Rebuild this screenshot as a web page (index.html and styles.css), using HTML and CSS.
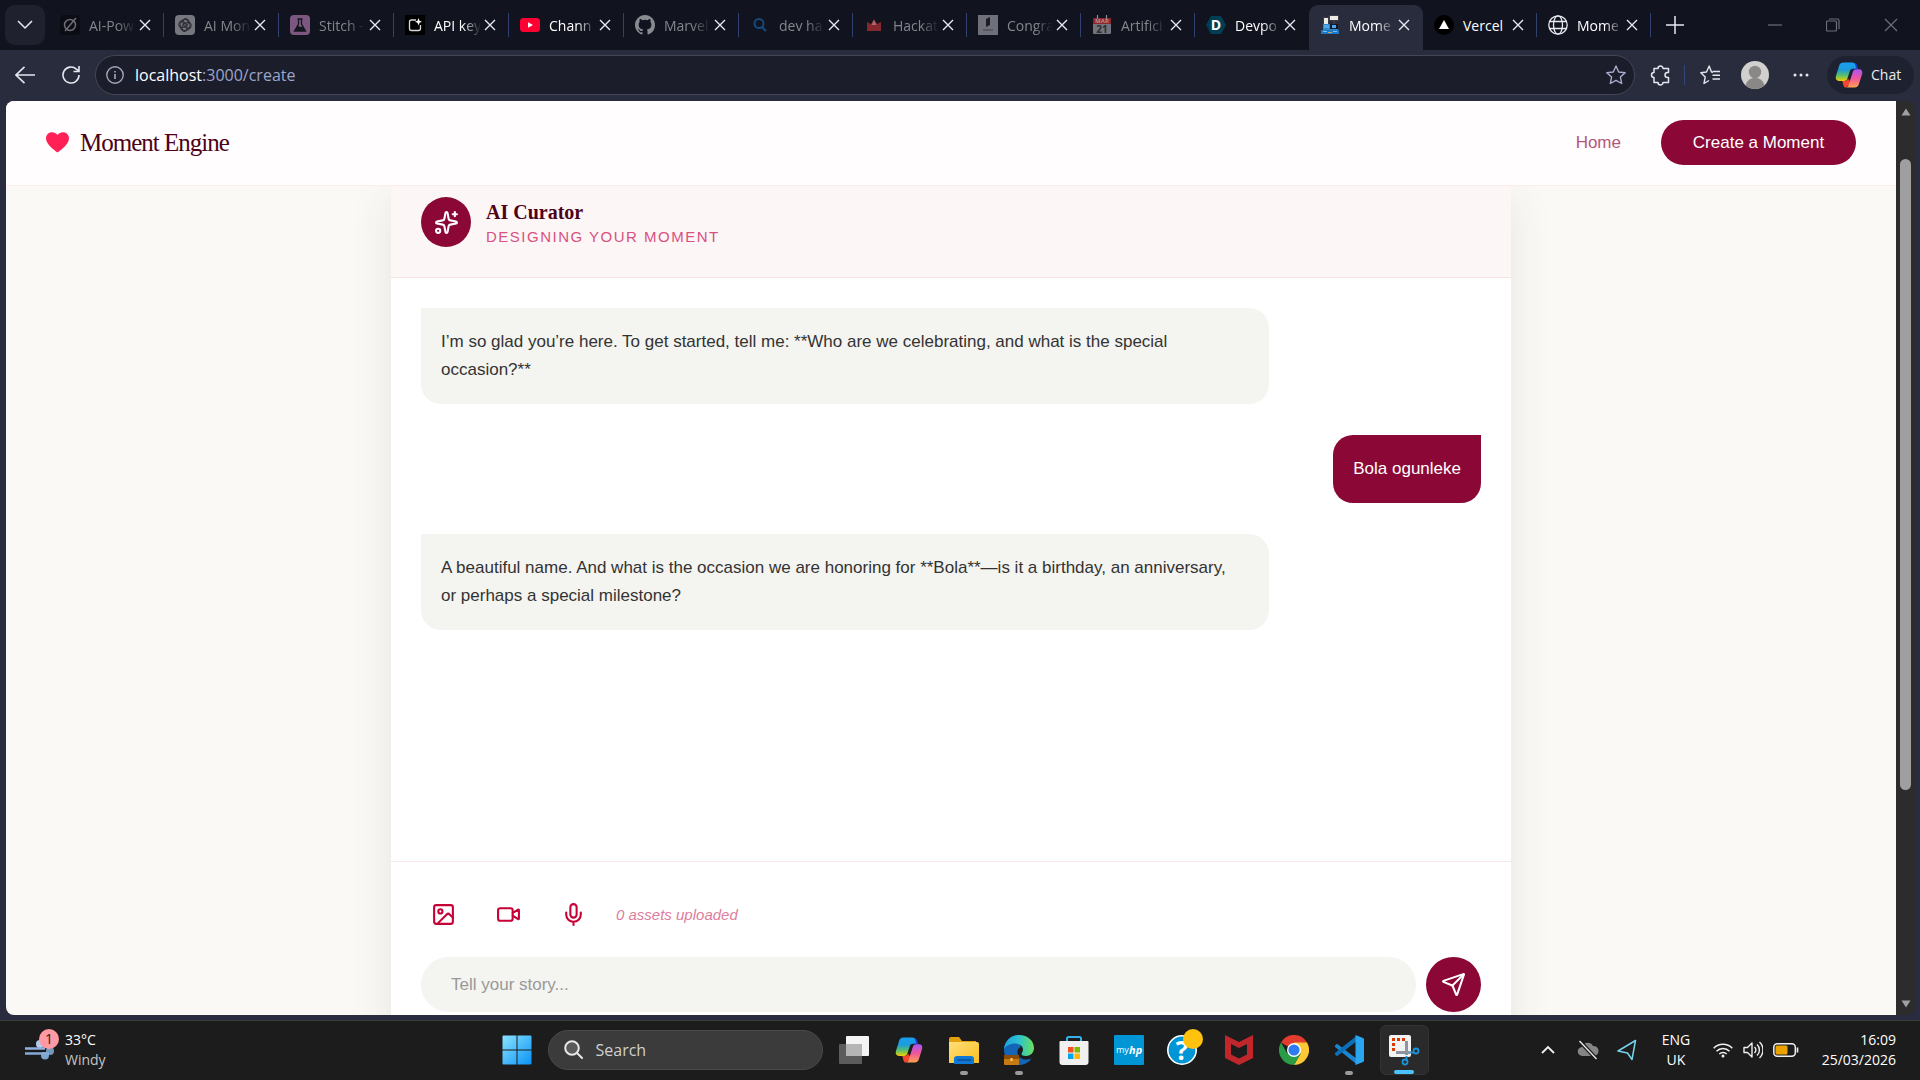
FILE: index.html
```html
<!DOCTYPE html>
<html lang="en">
<head>
<meta charset="utf-8">
<title>Moment Engine</title>
<link rel="stylesheet" href="styles.css">
</head>
<body>
<svg class="defs" aria-hidden="true">
  <defs>
    <linearGradient id="cpA" x1="0" y1="0" x2="0" y2="1"><stop offset="0" stop-color="#18a0f5"/><stop offset=".4" stop-color="#1c9bd8"/><stop offset=".7" stop-color="#5cbf6a"/><stop offset="1" stop-color="#f5d000"/></linearGradient>
    <linearGradient id="cpB" x1="0" y1="0" x2="0" y2="1"><stop offset="0" stop-color="#a855f7"/><stop offset=".5" stop-color="#f0569a"/><stop offset="1" stop-color="#ffa24d"/></linearGradient>
    <linearGradient id="win" x1="0" y1="0" x2="1" y2="1"><stop offset="0" stop-color="#8be3ff"/><stop offset="1" stop-color="#0a93f5"/></linearGradient>
    <linearGradient id="fold" x1="0" y1="0" x2="1" y2="1"><stop offset="0" stop-color="#ffdf7a"/><stop offset="1" stop-color="#fbbd1f"/></linearGradient>
    <linearGradient id="edge" x1="0" y1="0" x2="1" y2="0"><stop offset="0" stop-color="#1f9fe0"/><stop offset=".5" stop-color="#2cc3cf"/><stop offset="1" stop-color="#6be05a"/></linearGradient>
    <linearGradient id="wind" x1="0" y1="0" x2="1" y2="1"><stop offset="0" stop-color="#b9d2f5"/><stop offset="1" stop-color="#5a87b0"/></linearGradient>
    <symbol id="x" viewBox="0 0 12 12"><path d="M1 1l10 10M11 1L1 11" fill="none" stroke="currentColor" stroke-width="1.4"/></symbol>
    <symbol id="copilot" viewBox="0 0 28 28">
      <path d="M17 2h2.500c1.500 0 2.200 1 2.700 2.600L23.200 8h-4.400c-2 0-3 .8-3.500 2.500z" fill="#1743c9"/>
      <path d="M8.500 1.500h9c1.600 0 2.300.9 2.800 2.700l.9 3.300h-3c-2 0-2.900 1-3.400 2.700l-2.500 7.600c-.5 1.500-1.500 2.200-3 2.200H4c-2.600 0-3.800-2-3.100-4.700L4 5.300C4.700 2.700 6 1.500 8.500 1.500z" fill="url(#cpA)"/>
      <path d="M11 26.500c-1.500 0-2.200-1-2.700-2.600L7.300 20h2.200c2 0 3-.8 3.500-2.500L16 22z" fill="#f4452f"/>
      <path d="M19.500 26.500H11c1.500-.3 2.200-1.300 2.800-3.200l4-12.300c.6-1.700 1.500-2.700 3.400-2.700H24c2.600 0 3.800 2 3.100 4.700L24 22.700c-.7 2.600-2 3.800-4.500 3.800z" fill="url(#cpB)"/>
    </symbol>
  </defs>
</svg>

<div class="browser">
  <div class="tabstrip">
    <button class="tab-menu" aria-label="Tab actions"><svg width="16" height="10" viewBox="0 0 16 10" fill="none" stroke="#e8eaf2" stroke-width="1.5"><path d="M1 1l7 7 7-7"/></svg></button>
    <div class="tab asleep wide"><svg width="20" height="20" viewBox="0 0 20 20"><rect width="20" height="20" rx="4" fill="#0c0d14"/><g fill="none" stroke="#6d6e74" stroke-width="1.500"><circle cx="10" cy="10" r="5.500"/><path d="M5 16L16 3"/></g></svg><span class="tab-name">AI-Pow</span><button class="tab-x" aria-label="Close tab"><svg><use href="#x"/></svg></button></div>
    <div class="tab asleep wide"><svg width="20" height="20" viewBox="0 0 20 20"><rect width="20" height="20" rx="4" fill="#77787f"/><g fill="none" stroke="#2c2d35" stroke-width="1.200"><ellipse cx="8.500" cy="8.500" rx="5" ry="3.500" transform="rotate(-30 8.500 8.500)"/><ellipse cx="11.500" cy="11.500" rx="5" ry="3.500" transform="rotate(-30 11.500 11.500)"/><ellipse cx="11.500" cy="8.500" rx="3.200" ry="5" transform="rotate(-20 11.500 8.500)"/><ellipse cx="8.500" cy="11.500" rx="3.200" ry="5" transform="rotate(-20 8.500 11.500)"/></g></svg><span class="tab-name">AI Mon</span><button class="tab-x" aria-label="Close tab"><svg><use href="#x"/></svg></button></div>
    <div class="tab asleep wide"><svg width="20" height="20" viewBox="0 0 20 20"><rect width="20" height="20" rx="4" fill="#7c5880"/><path d="M7.500 4h5M8.500 4v5L4.500 16h11l-4-7V4" fill="none" stroke="#15151f" stroke-width="1.300"/><path d="M7 11.500l1.500-.5 2 1 2.500-.5 2.500 4.500h-11z" fill="#15151f"/></svg><span class="tab-name">Stitch -</span><button class="tab-x" aria-label="Close tab"><svg><use href="#x"/></svg></button></div>
    <div class="tab wide"><svg width="20" height="20" viewBox="0 0 20 20"><rect width="20" height="20" fill="#000"/><path d="M11 5H6.500A2 2 0 0 0 4.500 7v6.500a2 2 0 0 0 2 2h7a2 2 0 0 0 2-2V10" fill="none" stroke="#d8d8da" stroke-width="1.300"/><path d="M13.500 3l1 2.800 2.500 1-2.500 1-1 2.700-1-2.700-2.500-1 2.500-1z" fill="#fff"/></svg><span class="tab-name">API key</span><button class="tab-x" aria-label="Close tab"><svg><use href="#x"/></svg></button></div>
    <div class="tab wide"><svg width="20" height="20" viewBox="0 0 20 20"><rect y="3" width="20" height="14" rx="3.500" fill="#ff0033"/><path d="M8 7.200v5.600l5-2.800z" fill="#fff"/></svg><span class="tab-name">Chann</span><button class="tab-x" aria-label="Close tab"><svg><use href="#x"/></svg></button></div>
    <div class="tab asleep wide"><svg width="20" height="20" viewBox="0 0 16 16"><path fill="#8a8b90" d="M8 0C3.580 0 0 3.580 0 8c0 3.540 2.290 6.530 5.470 7.590.4.070.55-.17.55-.38v-1.490c-2.010.37-2.530-.49-2.690-.94-.09-.23-.48-.94-.82-1.130-.28-.15-.68-.52-.01-.53.63-.01 1.080.58 1.230.82.72 1.210 1.870.87 2.330.66.07-.52.28-.87.51-1.070-1.780-.2-3.640-.89-3.640-3.950 0-.87.31-1.590.82-2.150-.08-.2-.36-1.020.08-2.120 0 0 .67-.21 2.200.82a7.500 7.500 0 0 1 4 0c1.530-1.040 2.200-.82 2.200-.82.44 1.100.16 1.920.08 2.120.51.56.82 1.270.82 2.150 0 3.070-1.870 3.750-3.650 3.950.29.25.54.73.54 1.480v2.200c0 .21.15.46.55.38A8 8 0 0 0 16 8c0-4.420-3.580-8-8-8z"/></svg><span class="tab-name">Marvel</span><button class="tab-x" aria-label="Close tab"><svg><use href="#x"/></svg></button></div>
    <div class="tab asleep"><svg width="20" height="20" viewBox="0 0 20 20" fill="none" stroke="#174a7c" stroke-width="2"><circle cx="9" cy="8.500" r="4.500"/><path d="M12 12l4 4"/></svg><span class="tab-name">dev ha</span><button class="tab-x" aria-label="Close tab"><svg><use href="#x"/></svg></button></div>
    <div class="tab asleep"><svg width="20" height="20" viewBox="0 0 20 20"><path d="M3 7l4 2 3-5 3 5 4-2v9H3z" fill="#84282f"/><path d="M10 5l2.500 5h-5z" fill="#b06a70"/></svg><span class="tab-name">Hackat</span><button class="tab-x" aria-label="Close tab"><svg><use href="#x"/></svg></button></div>
    <div class="tab asleep"><svg width="20" height="20" viewBox="0 0 20 20"><path fill="#6f707a" d="M0 0h20v20H0z"/><path fill="#1b1c27" d="M8 4l4-2v8l-4 2z"/><path fill="#3d3e48" d="M5 14.500h10v1H5z"/></svg><span class="tab-name">Congra</span><button class="tab-x" aria-label="Close tab"><svg><use href="#x"/></svg></button></div>
    <div class="tab asleep"><svg width="20" height="20" viewBox="0 0 20 20"><path fill="#73747b" d="M1 8h18v10a1 1 0 0 1-1 1H2a1 1 0 0 1-1-1z"/><path fill="#8a2630" d="M1 3h18v6H1z"/><path d="M5.500 0v4M14.500 0v4" stroke="#8c8d94" stroke-width="1.200"/><text x="10" y="8" class="cal-month">MAR</text><text x="10" y="18" class="cal-day">21</text></svg><span class="tab-name">Artifici</span><button class="tab-x" aria-label="Close tab"><svg><use href="#x"/></svg></button></div>
    <div class="tab last-before"><svg width="20" height="20" viewBox="0 0 20 20"><path d="M5 1h10l5 9-5 9H5l-5-9z" fill="#003e54"/><text x="10" y="15" class="dev-d">D</text></svg><span class="tab-name">Devpo</span><button class="tab-x" aria-label="Close tab"><svg><use href="#x"/></svg></button></div>
    <div class="tab current"><svg width="20" height="20" viewBox="0 0 20 20"><path fill="#2f86cc" d="M3 9h15v7H3z"/><path fill="#10192b" d="M10 9h8v5h-8z"/><path fill="#4ea8ea" d="M4 10h5v3H4zM12 10h4v3h-4z"/><path fill="#3a3d48" d="M3 2h6v7H3zM9 0h10v6H9zM13 6h2v3h-2z"/><path fill="#eceae2" d="M10 1h8v4h-8zM4 3h4v6H4z"/><path fill="#1f78c4" d="M1 15h18v4H1z"/><path fill="#7cc2ef" d="M3 16h4v1H3zM13 16h4v1h-4z"/><path fill="#c9a56a" d="M8 17h4v1H8z"/></svg><span class="tab-name">Mome</span><button class="tab-x" aria-label="Close tab"><svg><use href="#x"/></svg></button></div>
    <div class="tab"><svg width="20" height="20" viewBox="0 0 20 20"><circle cx="10" cy="10" r="10" fill="#000"/><path d="M10 5l5 9H5z" fill="#fff"/></svg><span class="tab-name whole">Vercel</span><button class="tab-x" aria-label="Close tab"><svg><use href="#x"/></svg></button></div>
    <div class="tab"><svg width="20" height="20" viewBox="0 0 20 20" fill="none" stroke="#e8eaf2" stroke-width="1.300"><circle cx="10" cy="10" r="9.200"/><ellipse cx="10" cy="10" rx="4.500" ry="9.200"/><path d="M1.500 6.500h17M1.500 13.500h17"/></svg><span class="tab-name">Mome</span><button class="tab-x" aria-label="Close tab"><svg><use href="#x"/></svg></button></div>
    <button class="new-tab" aria-label="New tab"><svg width="18" height="18" viewBox="0 0 18 18" stroke="#e8eaf2" stroke-width="1.500"><path d="M9 0v18M0 9h18"/></svg></button>
    <div class="win-controls">
      <button aria-label="Minimize"><svg width="14" height="14" viewBox="0 0 14 14"><path d="M0 7h14"/></svg></button>
      <button aria-label="Restore"><svg width="14" height="14" viewBox="0 0 14 14"><rect x=".5" y="3" width="10" height="10" rx="1"/><path d="M3 1h8.500a1.500 1.500 0 0 1 1.500 1.500V11"/></svg></button>
      <button aria-label="Close"><svg width="14" height="14" viewBox="0 0 14 14"><path d="M1 1l12 12M13 1L1 13"/></svg></button>
    </div>
  </div>

  <div class="toolbar">
    <button class="tool" aria-label="Back"><svg width="20" height="18" viewBox="0 0 20 18"><path d="M20 9H1M9.500 .8L1 9l8.500 8.200"/></svg></button>
    <button class="tool" aria-label="Refresh"><svg width="20" height="20" viewBox="0 0 20 20"><path d="M18 10a8 8 0 1 1-2.600-5.900L18 6.300M18 1v5.500h-5.500"/></svg></button>
    <div class="address">
      <svg width="18" height="18" viewBox="0 0 18 18" fill="none" stroke="#a3a8bd" stroke-width="1.400"><circle cx="9" cy="9" r="8.200"/><path d="M9 8v5M9 5v1.500" stroke-width="1.600"/></svg>
      <span class="url">localhost<span class="url-rest">:3000/create</span></span>
      <button class="plain star" aria-label="Add to favourites"><svg width="20" height="20" viewBox="0 0 20 20" fill="none" stroke="#a5acca" stroke-width="1.400" stroke-linejoin="round"><path d="M10 1l2.700 6 6.500.7-4.800 4.400 1.300 6.400L10 15.300l-5.700 3.200 1.300-6.400L.8 7.700l6.500-.7z"/></svg></button>
    </div>
    <div class="tools-right">
      <button class="plain" aria-label="Extensions"><svg width="22" height="22" viewBox="0 0 22 22" fill="none" stroke="#e4e6f0" stroke-width="1.500" stroke-linejoin="round"><path d="M4 4.500h4a2.500 2.500 0 0 1 5 0h5.500v4h-1a2.400 2.400 0 0 0 0 5h1v5H13a2.500 2.500 0 0 1-5 0H4v-5a2.500 2.500 0 0 1 0-5z"/></svg></button>
      <span class="tool-sep"></span>
      <button class="plain" aria-label="Favourites"><svg width="20" height="20" viewBox="0 0 20 20" fill="none" stroke="#e4e6f0" stroke-width="1.400" stroke-linejoin="round"><path d="M13 7.300L11.500 7 9.200 1 6.500 7 .8 7.700l4.400 4.400L4 18.500l5-3M12.500 10.300H20M12.500 14H20M12.500 6.500H20"/></svg></button>
      <button class="plain" aria-label="Profile"><svg width="28" height="28" viewBox="0 0 28 28"><circle cx="14" cy="14" r="14" fill="#d2d0ce"/><circle cx="14" cy="11" r="6.200" fill="#8a8886"/><path d="M4.500 24.200a9.800 9.800 0 0 1 19 0A14 14 0 0 1 4.500 24.200z" fill="#8a8886"/></svg></button>
      <button class="plain" aria-label="Settings"><svg width="16" height="4" viewBox="0 0 16 4" fill="#e4e6f0"><circle cx="2" cy="2" r="1.500"/><circle cx="8" cy="2" r="1.500"/><circle cx="14" cy="2" r="1.500"/></svg></button>
      <button class="chat-pill"><svg width="28" height="28"><use href="#copilot"/></svg>Chat</button>
    </div>
  </div>

  <div class="viewport">
    <div class="page">
      <header class="site-header">
        <a class="brand" href="#"><svg width="23" height="21" viewBox="0 0 23 21"><path d="M11.500 20.500C9.500 18.800 0 12.800 0 6.500 0 2.800 2.600.2 6 .2c2.300 0 4 .9 5.500 2.700C13 1.100 14.700.2 17 .2c3.400 0 6 2.600 6 6.300 0 6.300-9.500 12.300-11.500 14z" fill="#ff2056"/></svg>Moment Engine</a>
        <nav class="site-nav">
          <a class="home" href="#">Home</a>
          <button class="cta">Create a Moment</button>
        </nav>
      </header>

      <main class="card">
        <div class="curator">
          <span class="avatar"><svg class="line" width="25" height="25" viewBox="0 0 24 24"><path d="M11.017 2.814a1 1 0 0 1 1.966 0l1.051 5.558a2 2 0 0 0 1.594 1.594l5.558 1.051a1 1 0 0 1 0 1.966l-5.558 1.051a2 2 0 0 0-1.594 1.594l-1.051 5.558a1 1 0 0 1-1.966 0l-1.051-5.558a2 2 0 0 0-1.594-1.594l-5.558-1.051a1 1 0 0 1 0-1.966l5.558-1.051a2 2 0 0 0 1.594-1.594z"/><path d="M20 2v4M22 4h-4"/><circle cx="4" cy="20" r="2"/></svg></span>
          <div>
            <h1>AI Curator</h1>
            <p>Designing your moment</p>
          </div>
        </div>

        <div class="messages">
          <p class="bubble theirs">I’m so glad you’re here. To get started, tell me: **Who are we celebrating, and what is the special occasion?**</p>
          <p class="bubble mine">Bola ogunleke</p>
          <p class="bubble theirs">A beautiful name. And what is the occasion we are honoring for **Bola**—is it a birthday, an anniversary, or perhaps a special milestone?</p>
        </div>

        <form class="composer">
          <div class="attach">
            <button type="button" aria-label="Add image"><svg class="line" width="25" height="25" viewBox="0 0 24 24"><rect x="3" y="3" width="18" height="18" rx="2"/><circle cx="9" cy="9" r="2"/><path d="m21 15-3.086-3.086a2 2 0 0 0-2.828 0L6 21"/></svg></button>
            <button type="button" aria-label="Add video"><svg class="line" width="25" height="25" viewBox="0 0 24 24"><path d="m16 13 5.223 3.482a.5.5 0 0 0 .777-.416V7.870a.5.5 0 0 0-.752-.432L16 10.500"/><rect x="2" y="6" width="14" height="12" rx="2"/></svg></button>
            <button type="button" aria-label="Record audio"><svg class="line" width="25" height="25" viewBox="0 0 24 24"><path d="M12 19v3M19 10v2a7 7 0 0 1-14 0v-2"/><rect x="9" y="2" width="6" height="13" rx="3"/></svg></button>
            <span class="assets">0 assets uploaded</span>
          </div>
          <div class="entry">
            <input type="text" aria-label="Your story" placeholder="Tell your story...">
            <button class="send" type="button" aria-label="Send"><svg class="line" width="25" height="25" viewBox="0 0 24 24"><path d="M14.536 21.686a.5.5 0 0 0 .937-.024l6.500-19a.496.496 0 0 0-.635-.635l-19 6.500a.5.5 0 0 0-.024.937l7.930 3.180a2 2 0 0 1 1.112 1.110z"/><path d="m21.854 2.147-10.940 10.939"/></svg></button>
          </div>
        </form>
      </main>
    </div>
    <div class="scrollbar">
      <svg width="10" height="8" viewBox="0 0 10 8"><path d="M5 0.500L9.500 7.500H.5z" fill="#a0a0a0"/></svg>
      <div class="track"><div class="thumb"></div></div>
      <svg width="10" height="8" viewBox="0 0 10 8"><path d="M5 7.500L9.500.5H.5z" fill="#a0a0a0"/></svg>
    </div>
  </div>
</div>

<div class="taskbar">
  <button class="weather">
    <svg width="34" height="44" viewBox="0 0 34 44"><circle cx="15" cy="16" r="4" fill="#b3cbec"/><circle cx="20" cy="27.500" r="4" fill="#7da6d0"/><circle cx="25" cy="23" r="4" fill="#7397b8"/><path d="M0 20.500h20" stroke="#8fb2de" stroke-width="2.500"/><path d="M0 25.500h24" stroke="#86aad6" stroke-width="2.500"/><path d="M0 23h21" stroke="#1c1c1c" stroke-width="2"/><circle cx="24" cy="11" r="10" fill="#ff99a4"/><text x="24" y="16" class="badge-num">1</text></svg>
    <span>33°C<br><span class="dim">Windy</span></span>
  </button>

  <div class="dock">
    <button class="app start" aria-label="Start"><svg width="30" height="30" viewBox="0 0 30 30" fill="url(#win)"><path d="M.5 1.500a1 1 0 0 1 1-1h13v14H.5zM15.500.5h13a1 1 0 0 1 1 1v13h-14zM.5 15.500h14v14h-13a1 1 0 0 1-1-1zM15.500 15.500h14v13a1 1 0 0 1-1 1h-13z"/></svg></button>
    <label class="search"><svg width="19" height="19" viewBox="0 0 19 19" fill="#5a5a5a" stroke="#e8e8e8" stroke-width="2"><circle cx="8" cy="8" r="6.800"/><path d="M13 13l5 5" stroke-linecap="round"/></svg><input type="text" placeholder="Search"></label>
    <button class="app" aria-label="Task view"><svg width="30" height="30" viewBox="0 0 30 30"><rect x="0" y="9" width="23" height="20" rx="1" fill="#5c5c5c"/><rect x="7" y="1" width="23" height="20" rx="1" fill="#f4f4f4"/><path d="M7 9h16v12H7z" fill="#b5b5b5"/></svg></button>
    <button class="app" aria-label="Copilot"><svg width="28" height="28"><use href="#copilot"/></svg></button>
    <button class="app open" aria-label="File Explorer"><svg width="30" height="30" viewBox="0 0 30 30"><path d="M0 4a2 2 0 0 1 2-2h8l3 4h14v6H0z" fill="#e5a00d"/><path d="M0 7h28a2 2 0 0 1 2 2v19H0z" fill="url(#fold)"/><path d="M5 29v-5a3 3 0 0 1 3-3h14a3 3 0 0 1 3 3v5z" fill="#0f78d4"/><path d="M8 25h14" stroke="#0a4f96" stroke-width="1.500"/></svg></button>
    <button class="app open" aria-label="Edge"><svg width="30" height="30" viewBox="0 0 30 30"><path d="M15 0C7 0 0 6 0 15c0 8 6 15 15 15 5 0 10-2.500 12.500-6.500-6 2.500-13 .500-14-5.500-.5-3 1-5 3-6z" fill="#1465b8"/><path d="M0 14C1 6 7 0 15 0c9 0 15 6 15 13 0 5-4 8-8 8-3 0-4.500-1-4.500-2s1.500-2 1.500-4.500C19 11 15 8.500 11 8.500 6 8.500 1.500 11 0 14z" fill="url(#edge)"/><rect x="0" y="20" width="15" height="10" rx="1" fill="#c87a12"/><path d="M0 20h15v4H0z" fill="#8d4d08"/><path d="M6.500 23h2v3h-2z" fill="#ffd35c"/></svg></button>
    <button class="app" aria-label="Microsoft Store"><svg width="30" height="30" viewBox="0 0 30 30"><path d="M8 7V3.500A1.500 1.500 0 0 1 9.500 2h11A1.500 1.500 0 0 1 22 3.500V7" fill="none" stroke="#35b0ea" stroke-width="2"/><path d="M.5 7a1 1 0 0 1 1-1h27a1 1 0 0 1 1 1v20a3 3 0 0 1-3 3h-23a3 3 0 0 1-3-3z" fill="#f0f0f0"/><path d="M9 12h5.500v5.500H9z" fill="#f25022"/><path d="M15.500 12H21v5.500h-5.500z" fill="#7fba00"/><path d="M9 18.500h5.500V24H9z" fill="#00a4ef"/><path d="M15.500 18.500H21V24h-5.500z" fill="#ffb900"/></svg></button>
    <button class="app" aria-label="myHP"><svg width="30" height="30" viewBox="0 0 30 30"><rect width="30" height="30" rx="1" fill="#0096d6"/><text x="2" y="18" class="hp-my">my</text><text x="15" y="19" class="hp-hp">hp</text></svg></button>
    <button class="app" aria-label="HP Support"><svg class="help" width="38" height="38" viewBox="0 0 38 38"><circle cx="17" cy="22" r="14.200" fill="#0096d6" stroke="#fff" stroke-width="1.600"/><text x="17" y="32" class="help-q">?</text><circle cx="28" cy="11" r="10" fill="#ffc20e"/></svg></button>
    <button class="app" aria-label="McAfee"><svg width="28" height="30" viewBox="0 0 28 30"><path d="M0 0l14 7L28 0v23l-14 7-14-7zM6 9v10.500l8 4 8-4V9l-8 4z" fill="#c0272d" fill-rule="evenodd"/></svg></button>
    <button class="app" aria-label="Chrome"><svg width="30" height="30" viewBox="0 0 30 30"><path d="M15 15L2 7.500A15 15 0 0 1 28 7.500z" fill="#e33b2e"/><path d="M28 7.500H15l6.500 11.300L15 30a15 15 0 0 0 13-22.500z" fill="#fcc934"/><path d="M2 7.500a15 15 0 0 0 13 22.500l6.500-11.300L15 15l-6.500 3.700z" fill="#2a9c46"/><circle cx="15" cy="15" r="7" fill="#fff"/><circle cx="15" cy="15" r="5.600" fill="#2f7bf0"/></svg></button>
    <button class="app open" aria-label="Visual Studio Code"><svg width="30" height="30" viewBox="0 0 30 30"><path d="M1 10.500l2-1.800 20 15.300v5.500L1 12z" fill="#1a86d0"/><path d="M1 19.500l2 1.800L23 6V.5L1 18z" fill="#0c70b8"/><path d="M21.500 0L29 3a1.500 1.500 0 0 1 1 1.500v21a1.500 1.500 0 0 1-1 1.500l-7.500 3z" fill="#2aa5f0"/></svg></button>
    <button class="app focused" aria-label="Snipping Tool"><svg width="32" height="32" viewBox="0 0 32 32"><rect x="1" y="1" width="22" height="22" rx="2" fill="#f3f3f5"/><path d="M4 4h3v3H4zM9 4h3v3H9zM14 4h3v3h-3zM4 9h3v3H4zM4 14h3v3H4z" fill="#d83b01"/><path d="M18.500 7v14M8 18.500h14" stroke="#8f959e" stroke-width="3"/><g fill="none" stroke="#1c93d8" stroke-width="1.800"><circle cx="28" cy="17" r="2.500"/><circle cx="17" cy="28" r="2.500"/><path d="M22 18.500h4M18.500 22v4"/></g></svg></button>
  </div>

  <div class="tray">
    <button class="plain chev" aria-label="Hidden icons"><svg width="14" height="9" viewBox="0 0 14 9" fill="none" stroke="#f0f0f0" stroke-width="1.800"><path d="M1 8l6-6 6 6"/></svg></button>
    <svg class="cloud" width="22" height="20" viewBox="0 0 22 20"><path d="M5.500 16a4.500 4.500 0 0 1-.5-9 6 6 0 0 1 11-1 5 5 0 0 1 1 10z" fill="#858585"/><path d="M2.500 1l17 18" stroke="#1c1c1c" stroke-width="4"/><path d="M2.500 1l17 18" stroke="#e8e8e8" stroke-width="1.400"/></svg>
    <svg class="loc" width="20" height="22" viewBox="0 0 20 22" fill="none" stroke="#76d3ec" stroke-width="1.500" stroke-linejoin="round"><path d="M18.500 1.500L1 12l9.500 2 4.500 6.500z"/></svg>
    <button class="lang">ENG<br>UK</button>
    <button class="plain status" aria-label="Network, volume and battery">
      <svg width="20" height="16" viewBox="0 0 20 16" fill="none" stroke="#f0f0f0" stroke-width="1.500"><path d="M.7 6.200a13 13 0 0 1 18.600 0M3.500 9.200a9 9 0 0 1 13 0M6.300 12a5.200 5.200 0 0 1 7.400 0"/><circle cx="10" cy="14" r="1.500" fill="#f0f0f0" stroke="none"/></svg>
      <svg width="20" height="18" viewBox="0 0 20 18" fill="none" stroke="#f0f0f0" stroke-width="1.400" stroke-linejoin="round"><path d="M1 6.500h3.500L9 2v14l-4.500-4.500H1zM11.500 6a4 4 0 0 1 0 6M14 3.500a7.500 7.500 0 0 1 0 11M16.500 1a11 11 0 0 1 0 16"/></svg>
      <svg width="26" height="14" viewBox="0 0 26 14"><rect x=".8" y=".8" width="21.500" height="12.400" rx="3.500" fill="none" stroke="#f0f0f0" stroke-width="1.500"/><rect x="2.500" y="2.500" width="12" height="9" rx="1.500" fill="#eaa300"/><path d="M24.500 4.500v5" stroke="#f0f0f0" stroke-width="1.600"/></svg>
    </button>
    <button class="clock">16:09<br>25/03/2026</button>
  </div>
</div>
</body>
</html>
```
FILE: styles.css
```css
* { box-sizing: border-box; }
html, body { height: 100%; }
body {
  margin: 0;
  display: flex;
  flex-direction: column;
  overflow: hidden;
  background: #1c1c1c;
  font-family: "Liberation Sans", Arial, sans-serif;
}
button, input {
  margin: 0;
  padding: 0;
  border: 0;
  background: none;
  color: inherit;
  font: inherit;
  outline: 0;
}
a { color: inherit; text-decoration: none; }
h1, p { margin: 0; }
svg { display: block; flex: none; }
.defs { position: absolute; width: 0; height: 0; }
.plain { display: flex; align-items: center; justify-content: center; }
.line { fill: none; stroke: currentColor; stroke-width: 2; stroke-linecap: round; stroke-linejoin: round; }

/* Browser frame */
.browser {
  flex: 1;
  min-height: 0;
  display: flex;
  flex-direction: column;
  background: #282c3e;
  font-family: "Open Sans", "Noto Sans", sans-serif;
}
.tabstrip {
  flex: none;
  display: flex;
  align-items: flex-end;
  height: 50px;
  padding-left: 5px;
  background: #11131f;
}
.tab-menu {
  align-self: center;
  display: flex;
  align-items: center;
  justify-content: center;
  width: 40px;
  height: 40px;
  margin-right: 4px;
  border-radius: 10px;
  background: #1f212f;
}
.tab {
  position: relative;
  flex: 0 1 114px;
  min-width: 0;
  height: 45px;
  display: flex;
  align-items: center;
  padding: 0 13px 5px 11px;
  color: #fff;
  font-size: 14px;
}
.tab.wide { flex-basis: 115px; }
.tab::after {
  content: "";
  position: absolute;
  right: 0;
  top: 8px;
  width: 1px;
  height: 24px;
  background: #30406f;
}
.tab.asleep { color: #85868c; }
.tab.current { background: #282c3c; border-radius: 9px 9px 0 0; }
.tab.current::after, .tab.last-before::after { display: none; }
.tab-name {
  flex: 1;
  min-width: 0;
  margin-left: 9px;
  margin-right: 3px;
  overflow: hidden;
  white-space: nowrap;
  mask-image: linear-gradient(to right, #000 60%, transparent 100%);
}
.tab-name.whole { mask-image: none; }
.tab-x { width: 12px; height: 12px; color: #e8eaf2; }
.tab-x svg { width: 12px; height: 12px; }
.cal-month { font: bold 6px "Open Sans", sans-serif; fill: #b98c92; text-anchor: middle; }
.cal-day { font: bold 10px "Open Sans", sans-serif; fill: #2c2d35; text-anchor: middle; }
.dev-d { font: bold 14px "Open Sans", sans-serif; fill: #fff; text-anchor: middle; }
.new-tab { align-self: center; margin-left: 15px; }
.win-controls { display: flex; align-self: center; margin-left: auto; }
.win-controls button { display: flex; align-items: center; justify-content: center; width: 58px; height: 48px; }
.win-controls svg { fill: none; stroke: #6d6f78; stroke-width: 1.2; }

.toolbar {
  flex: none;
  display: flex;
  align-items: center;
  height: 51px;
  padding: 0 6px 2px 2px;
  background: #282c3c;
}
.tool { display: flex; align-items: center; justify-content: center; width: 46px; height: 40px; }
.tool svg { fill: none; stroke: #e4e6f0; stroke-width: 1.6; }
.address {
  flex: 1;
  display: flex;
  align-items: center;
  height: 40px;
  margin-left: 1px;
  padding: 0 8px 0 10px;
  border: 1px solid #434657;
  border-radius: 20px;
  background: #1c1d2a;
  color: #fff;
  font-size: 16px;
}
.url { margin-left: 11px; }
.url-rest { color: #9aa5ca; }
.star { margin-left: auto; }
.tools-right { display: flex; align-items: center; }
.tools-right > :nth-child(1) { margin-left: 15px; }
.tool-sep { width: 1px; height: 20px; margin: 0 15px 0 12px; background: #34457c; }
.tools-right > :nth-child(4) { margin-left: 21px; }
.tools-right > :nth-child(5) { margin-left: 24px; }
.chat-pill {
  display: flex;
  align-items: center;
  gap: 8px;
  width: 87px;
  height: 38px;
  margin-left: 18px;
  padding-left: 8px;
  border-radius: 19px;
  background: #1e2230;
  color: #e8eaf2;
  font-size: 14px;
}

/* Web page */
.viewport {
  flex: 1;
  min-height: 0;
  display: flex;
  margin: 0 5px 5px 6px;
  border-radius: 8px;
  overflow: hidden;
  font-family: "Liberation Sans", Arial, sans-serif;
}
.page {
  flex: 1;
  min-width: 0;
  overflow: hidden;
  background: #faf9f6;
  font-size: 17px;
}
.site-header {
  position: relative;
  z-index: 1;
  display: flex;
  align-items: center;
  justify-content: space-between;
  height: 85px;
  padding: 0 40px 1px;
  border-bottom: 1px solid #fdecec;
  background: #fffdfe;
}
.brand {
  display: flex;
  align-items: center;
  gap: 11px;
  color: #4d0218;
  font-family: "Liberation Serif", "Times New Roman", serif;
  font-size: 25px;
  letter-spacing: -1px;
}
.site-nav { display: flex; align-items: center; gap: 40px; }
.home { color: #b3577a; }
.cta {
  width: 195px;
  height: 45px;
  border-radius: 23px;
  background: #8b0836;
  color: #fff;
}
.card {
  width: 100%;
  max-width: 1120px;
  margin: 0 auto;
  background: #fff;
  box-shadow: 0 10px 40px rgba(60, 60, 40, 0.1);
}
.curator {
  display: flex;
  align-items: center;
  gap: 15px;
  padding: 11px 30px 30px;
  border-bottom: 1px solid #fbe3e3;
  background: #fdf6f7;
}
.avatar {
  display: flex;
  align-items: center;
  justify-content: center;
  width: 50px;
  height: 50px;
  border-radius: 50%;
  background: #8b0836;
  color: #fff;
}
.curator h1 {
  color: #4d0218;
  font-family: "Liberation Serif", "Times New Roman", serif;
  font-size: 20px;
  line-height: 30px;
}
.curator p {
  color: #d8517f;
  font-size: 15px;
  line-height: 20px;
  letter-spacing: 0.1em;
  text-transform: uppercase;
}
.messages {
  display: flex;
  flex-direction: column;
  align-items: flex-start;
  gap: 31px;
  min-height: 583px;
  padding: 30px;
}
.bubble {
  max-width: 80%;
  padding: 20px;
  border-radius: 20px;
  line-height: 28px;
}
.theirs { padding-right: 28px; border-top-left-radius: 0; background: #f4f4f0; color: #333; }
.mine { align-self: flex-end; border-top-right-radius: 0; background: #8b0836; color: #fff; }
.composer { padding: 30px; border-top: 1px solid #fae6e8; }
.attach { display: flex; align-items: center; gap: 20px; color: #c70036; }
.attach button { padding: 10px; }
.assets { color: #dd7d9d; font-size: 15px; font-style: italic; }
.entry { display: flex; gap: 10px; margin-top: 20px; }
.entry input {
  flex: 1;
  min-width: 0;
  height: 55px;
  padding: 0 30px;
  border-radius: 28px;
  background: #f4f4f0;
}
.entry input::placeholder { color: #999; opacity: 1; }
.send {
  display: flex;
  align-items: center;
  justify-content: center;
  width: 55px;
  height: 55px;
  border-radius: 50%;
  background: #8b0836;
  color: #fff;
}
.scrollbar {
  display: flex;
  flex-direction: column;
  align-items: center;
  width: 19px;
  padding: 7px 0;
  background: #2c2c2c;
}
.track { flex: 1; padding: 43px 0 42px; }
.thumb { width: 11px; height: 79%; border-radius: 6px; background: #9f9f9f; }

/* Taskbar */
.taskbar {
  flex: none;
  display: grid;
  grid-template-columns: 1fr auto 1fr;
  align-items: center;
  height: 60px;
  padding-bottom: 2px;
  border-top: 1px solid #3c3c3c;
  color: #fff;
  font-family: "Open Sans", "Noto Sans", sans-serif;
  font-size: 14px;
  line-height: 20px;
}
.weather { justify-self: start; display: flex; align-items: center; gap: 6px; padding-left: 25px; text-align: left; }
.dim { color: #c4c4c4; }
.badge-num { font: 14px "Open Sans", sans-serif; fill: #1c1c1c; text-anchor: middle; }
.dock { display: flex; align-items: center; padding-right: 2px; }
.app {
  position: relative;
  display: flex;
  align-items: center;
  justify-content: center;
  width: 55px;
  height: 50px;
}
.app.open::after, .app.focused::after {
  content: "";
  position: absolute;
  left: 50%;
  bottom: 0;
  width: 8px;
  height: 4px;
  margin-left: -4px;
  border-radius: 2px;
  background: #9a9a9a;
}
.app.focused { width: 49px; margin-left: 3px; border: 1px solid #333; border-radius: 6px; background: #2a2a2a; }
.app.focused::after { width: 20px; margin-left: -10px; background: #4cc2ff; }
.search {
  display: flex;
  align-items: center;
  gap: 13px;
  width: 275px;
  height: 40px;
  margin: 0 4px 0 3px;
  padding: 0 15px;
  border: 1px solid #4a4a4a;
  border-radius: 20px;
  background: #3b3b3b;
  font-size: 16px;
}
.search input { flex: 1; min-width: 0; }
.search input::placeholder { color: #d0d0d0; opacity: 1; }
.help { margin-bottom: 6px; }
.hp-my { font: 9px "Open Sans", sans-serif; fill: #fff; }
.hp-hp { font: italic bold 11px "Open Sans", sans-serif; fill: #fff; }
.help-q { font: bold 26px "Open Sans", sans-serif; fill: #fff; text-anchor: middle; }
.tray { justify-self: end; display: flex; align-items: center; padding-right: 24px; }
.cloud { margin-left: 22px; }
.loc { margin-left: 18px; }
.lang { width: 50px; margin-left: 14px; text-align: center; }
.status { gap: 10px; margin-left: 12px; }
.clock { width: 84px; margin-left: 13px; text-align: right; }
```
